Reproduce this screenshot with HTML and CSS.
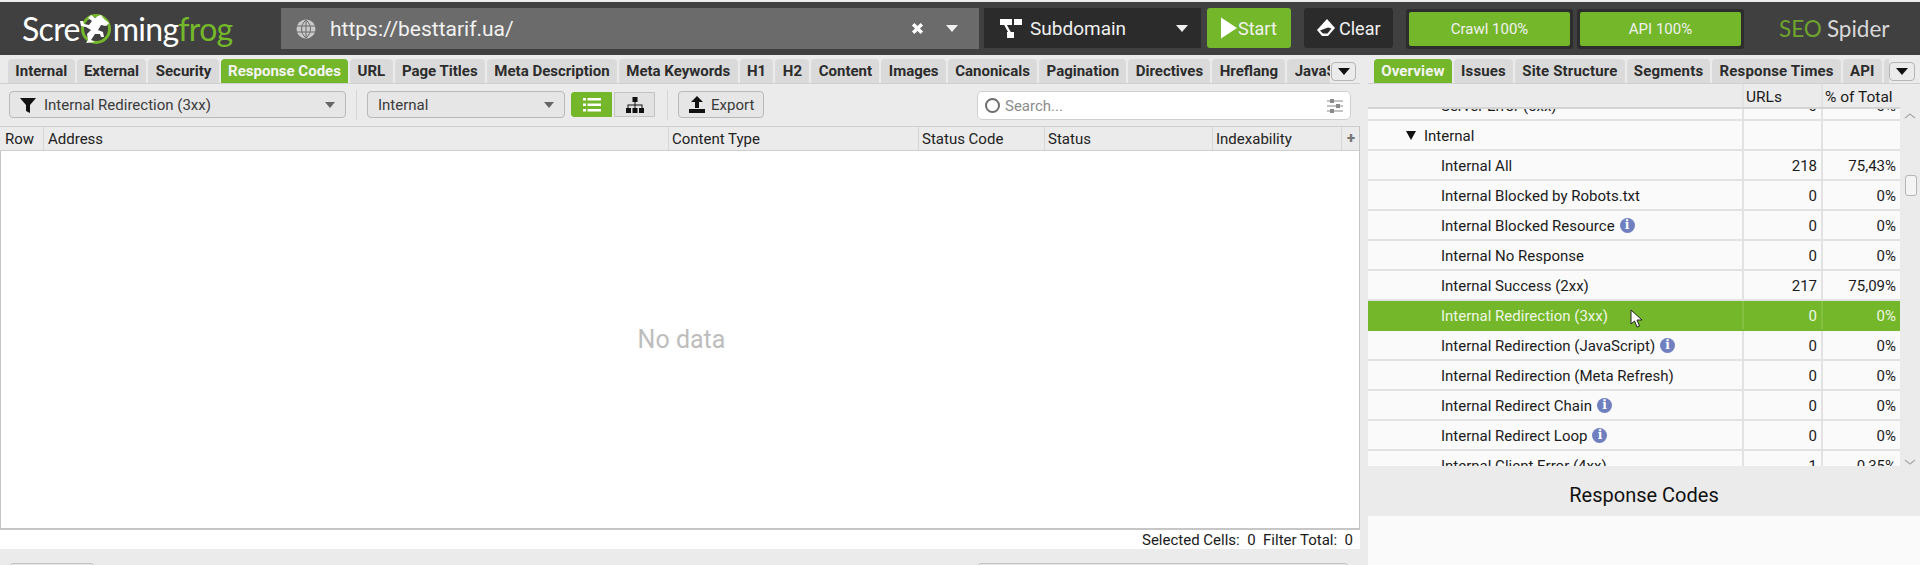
FILE: index.html
```html
<!DOCTYPE html>
<html lang="en">
<head>
<meta charset="utf-8">
<title>Screaming Frog SEO Spider</title>
<link rel="stylesheet" href="styles.css">
</head>
<body>
<div class="app">
  <header class="topbar">
    <div class="logo">
      <span>Scre</span>
      <svg class="frog" viewBox="0 0 32 34" width="32" height="34" aria-hidden="true">
        <circle cx="16" cy="16" r="13.5" fill="none" stroke="#74b72a" stroke-width="3"/>
        <path d="M24 6 l5 4 -3 3 -5 -1 -3 5 5 2 1 5 -3 0 -1 -3 -5 0 -4 6 4 2 -9 1 2 -3 -1 -6 4 -4 -5 -3 -5 -1 -1 -5 3 0 1 3 5 1 3 -4 -4 -3 3 -3 4 3 3 -2 3 -1z" fill="#fff"/>
      </svg>
      <span>ming</span><span class="logo-green">frog</span>
    </div>
    <div class="urlbar">
      <svg class="globe" viewBox="0 0 20 20" width="20" height="20" aria-hidden="true">
        <circle cx="10" cy="10" r="9.500" fill="#c9c9c9"/>
        <path d="M1 7h18M1 13h18M10 1v18M10 1c-6 5-6 13 0 18M10 1c6 5 6 13 0 18" fill="none" stroke="#6b6b6b" stroke-width="1"/>
      </svg>
      <span class="url">https://besttarif.ua/</span>
      <svg class="x" viewBox="0 0 12 12" width="13" height="13" aria-hidden="true"><path d="M2 2l8 8M10 2l-8 8" stroke="#fff" stroke-width="3.200"/></svg>
      <span class="caret caret-light url-caret"></span>
    </div>
    <div class="mode">
      <svg viewBox="0 0 24 20" width="24" height="20" aria-hidden="true">
        <path d="M1 1h12v6H1zM15 1h8v6h-8zM8 14h7v6H8z" fill="#fff"/>
        <path d="M6 6l5 9" stroke="#fff" stroke-width="2.500" fill="none"/>
      </svg>
      <span class="mode-label">Subdomain</span>
      <span class="caret caret-light"></span>
    </div>
    <button class="btn-start"><svg viewBox="0 0 18 22" width="17" height="22" aria-hidden="true"><path d="M0 0l17 11L0 22z" fill="#fff"/></svg>Start</button>
    <button class="btn-clear"><svg viewBox="0 0 20 18" width="20" height="18" aria-hidden="true"><path d="M11 0l8 9-7 8H6l-5-6z" fill="#fff"/><path d="M4 11.500l8-3 3.500 1-4 5H7z" fill="#2b2b2b"/></svg>Clear</button>
    <div class="progress"><span>Crawl 100%</span></div>
    <div class="progress"><span>API 100%</span></div>
    <div class="brand"><span class="brand-seo">SEO</span> Spider</div>
  </header>

  <main class="main">
    <section class="left">
      <div class="tabrow left-tabs">
        <div class="tabs">
          <span class="tab">Internal</span><span class="tab">External</span><span class="tab">Security</span><span class="tab active">Response Codes</span><span class="tab">URL</span><span class="tab">Page Titles</span><span class="tab">Meta Description</span><span class="tab">Meta Keywords</span><span class="tab">H1</span><span class="tab">H2</span><span class="tab">Content</span><span class="tab">Images</span><span class="tab">Canonicals</span><span class="tab">Pagination</span><span class="tab">Directives</span><span class="tab">Hreflang</span><span class="tab">JavaScript</span>
        </div>
        <span class="more"><i class="caret caret-dark"></i></span>
      </div>
      <div class="toolbar">
        <div class="select select-filter">
          <svg viewBox="0 0 16 16" width="16" height="16" aria-hidden="true"><path d="M0 1h16L10 8v8l-4-2V8z" fill="#111"/></svg>
          <span class="select-text">Internal Redirection (3xx)</span>
          <span class="caret caret-grey"></span>
        </div>
        <span class="sep"></span>
        <div class="select select-scope">
          <span class="select-text">Internal</span>
          <span class="caret caret-grey"></span>
        </div>
        <span class="view view-on">
          <svg viewBox="0 0 18 16" width="18" height="16" aria-hidden="true"><path d="M0 1h3v2.500H0zM4.500 1H18v2.500H4.500zM0 6.500h3V9H0zM4.500 6.500H18V9H4.500zM0 12h3v2.500H0zM4.500 12H18v2.500H4.500z" fill="#fff"/></svg>
        </span>
        <span class="view">
          <svg viewBox="0 0 18 16" width="18" height="16" aria-hidden="true"><path d="M6.500 0h5v5h-5zM0 11h5v5H0zM6.500 11h5v5h-5zM13 11h5v5h-5zM8.500 5h1v2.500h7V11h-1V8.500h-6V11h-1V8.500h-6V11h-1V7.500h7z" fill="#111"/></svg>
        </span>
        <span class="sep sep-b"></span>
        <button class="export">
          <svg viewBox="0 0 18 18" width="18" height="18" aria-hidden="true"><path d="M9 0l6 6h-4v6H7V6H3zM1 13h16v4H1z" fill="#111"/></svg>Export
        </button>
        <div class="search">
          <span class="search-ring"></span>
          <span class="search-text">Search...</span>
          <svg viewBox="0 0 16 14" width="16" height="14" aria-hidden="true"><path d="M0 2h16M0 7h16M0 12h16" stroke="#8a8a8a"/><path d="M3 0h4v4H3zM9 5h4v4H9zM3 10h4v4H3z" fill="#8a8a8a"/></svg>
        </div>
      </div>
      <div class="table">
        <div class="thead">
          <span class="th th-row">Row</span>
          <span class="th th-address">Address</span>
          <span class="th th-type">Content Type</span>
          <span class="th th-code">Status Code</span>
          <span class="th th-status">Status</span>
          <span class="th th-index">Indexability</span>
          <span class="th th-plus">+</span>
        </div>
        <div class="tbody">No data</div>
      </div>
      <div class="totals">Selected Cells:&nbsp; 0 &nbsp;Filter Total:&nbsp; 0</div>
      <div class="foot">
        <span class="foot-btn foot-a"></span>
        <span class="foot-btn foot-b"></span>
      </div>
    </section>

    <section class="right">
      <div class="tabrow right-tabs">
        <div class="tabs">
          <span class="tab">Overview</span><span class="tab">Issues</span><span class="tab">Site Structure</span><span class="tab">Segments</span><span class="tab">Response Times</span><span class="tab">API</span><span class="tab">Spelling</span>
        </div>
        <span class="more more-r"><i class="caret caret-dark"></i></span>
      </div>
      <div class="overview">
        <div class="ohead">
          <span class="oc-name"></span><span class="oc-urls">URLs</span><span class="oc-pct">% of Total</span>
        </div>
        <div class="olist">
          <div class="orow orow-clip"><span class="oc-name">Server Error (5xx)</span><span class="oc-urls">0</span><span class="oc-pct">0%</span></div>
          <div class="orow orow-group"><span class="oc-name"><i class="tri"></i>Internal</span><span class="oc-urls"></span><span class="oc-pct"></span></div>
          <div class="orow"><span class="oc-name">Internal All</span><span class="oc-urls">218</span><span class="oc-pct">75,43%</span></div>
          <div class="orow"><span class="oc-name">Internal Blocked by Robots.txt</span><span class="oc-urls">0</span><span class="oc-pct">0%</span></div>
          <div class="orow"><span class="oc-name">Internal Blocked Resource<i class="info">i</i></span><span class="oc-urls">0</span><span class="oc-pct">0%</span></div>
          <div class="orow"><span class="oc-name">Internal No Response</span><span class="oc-urls">0</span><span class="oc-pct">0%</span></div>
          <div class="orow"><span class="oc-name">Internal Success (2xx)</span><span class="oc-urls">217</span><span class="oc-pct">75,09%</span></div>
          <div class="orow orow-on"><span class="oc-name">Internal Redirection (3xx)</span><span class="oc-urls">0</span><span class="oc-pct">0%</span></div>
          <div class="orow"><span class="oc-name">Internal Redirection (JavaScript)<i class="info">i</i></span><span class="oc-urls">0</span><span class="oc-pct">0%</span></div>
          <div class="orow"><span class="oc-name">Internal Redirection (Meta Refresh)</span><span class="oc-urls">0</span><span class="oc-pct">0%</span></div>
          <div class="orow"><span class="oc-name">Internal Redirect Chain<i class="info">i</i></span><span class="oc-urls">0</span><span class="oc-pct">0%</span></div>
          <div class="orow"><span class="oc-name">Internal Redirect Loop<i class="info">i</i></span><span class="oc-urls">0</span><span class="oc-pct">0%</span></div>
          <div class="orow"><span class="oc-name">Internal Client Error (4xx)</span><span class="oc-urls">1</span><span class="oc-pct">0,35%</span></div>
          <svg class="cursor" viewBox="0 0 13 19" width="13" height="19" aria-hidden="true"><path d="M1 1v14l3.500-3 2.500 6 2.500-1-2.500-6h5z" fill="#fff" stroke="#222"/></svg>
        </div>
        <div class="scrollbar">
          <svg viewBox="0 0 12 6" width="12" height="6" aria-hidden="true"><path d="M1 5l5-4 5 4" fill="none" stroke="#a8a8a8" stroke-width="1.200"/></svg>
          <span class="thumb"></span>
          <svg class="sb-down" viewBox="0 0 12 6" width="12" height="6" aria-hidden="true"><path d="M1 1l5 4 5-4" fill="none" stroke="#a8a8a8" stroke-width="1.200"/></svg>
        </div>
      </div>
      <div class="detail-title">Response Codes</div>
      <div class="detail-body"></div>
    </section>
  </main>
</div>
</body>
</html>
```

FILE: styles.css
```css
* { box-sizing: border-box; }
html, body { margin: 0; padding: 0; height: 565px; overflow: hidden; }
body { background: #ebebeb; font-family: Roboto, "Liberation Sans", sans-serif; font-size: 15px; color: #1a1a1a; }
.app { width: 1920px; height: 565px; padding-top: 2px; display: flex; flex-direction: column; overflow: hidden; }

/* top bar */
.topbar { height: 53px; flex: none; background: #404040; display: flex; align-items: flex-start; padding-top: 6px; }
.logo { width: 281px; height: 41px; padding-left: 22px; display: flex; align-items: center; font-family: Lato, sans-serif; font-weight: 400; font-size: 32px; letter-spacing: -.7px; color: #fff; white-space: nowrap; }
.frog { margin: 2px 1px 0 0; flex: none; }
.logo-green { color: #74b72a; }
.urlbar { width: 698px; height: 41px; background: #6b6b6b; display: flex; align-items: center; padding-left: 15px; color: #f2f2f2; }
.url { font-size: 21px; margin-left: 14px; flex: 1; }
.x { margin-right: 22px; }
.url-caret { margin-right: 21px; }
.caret { display: inline-block; width: 0; height: 0; border-left: 6px solid transparent; border-right: 6px solid transparent; flex: none; }
.caret-light { border-top: 7px solid #f0f0f0; }
.caret-dark { border-top: 7px solid #111; }
.caret-grey { border-top: 6px solid #666; border-left-width: 5px; border-right-width: 5px; }
.mode { width: 217px; height: 40px; margin-left: 5px; background: #2b2b2b; color: #f0f0f0; display: flex; align-items: center; padding-left: 15px; }
.mode-label { font-size: 19px; margin-left: 7px; flex: 1; }
.mode .caret { margin-right: 13px; }
button { font-family: inherit; border: 0; padding: 0; display: flex; align-items: center; }
.btn-start { width: 84px; height: 40px; margin-left: 6px; background: #74b72a; color: #f2f2f2; font-size: 18px; border-radius: 3px; padding-left: 14px; gap: 0; }
.btn-clear { width: 89px; height: 40px; margin-left: 13px; background: #2b2b2b; color: #f2f2f2; font-size: 18px; border-radius: 3px; padding-left: 12px; gap: 3px; }
.progress { width: 167px; height: 40px; margin: 1px 0 0 0; background: #2d2d2d; border-radius: 3px; padding: 3px; }
.btn-clear + .progress { margin-left: 13px; }
.progress + .progress { margin-left: 4px; }
.progress span { display: flex; align-items: center; justify-content: center; height: 34px; background: #74b72a; border-radius: 2px; color: #f0f0f0; font-size: 15px; }
.brand { margin-left: 35px; height: 41px; display: flex; align-items: center; gap: 5px; font-family: Lato, sans-serif; font-size: 22.500px; font-weight: 400; color: #d8d8d8; white-space: nowrap; }
.brand-seo { color: #6ea32e; }

/* panes */
.main { flex: 1; display: flex; min-height: 0; }
.left { width: 1360px; flex: none; display: flex; flex-direction: column; }
.right { width: 552px; margin-left: 8px; flex: none; display: flex; flex-direction: column; }

/* tabs */
.tabrow { height: 29px; flex: none; padding-top: 4px; display: flex; position: relative; border-bottom: 1px solid #d0d0d0; }
.left-tabs { padding-left: 8px; }
.right-tabs { padding-left: 6px; }
.tabs { display: flex; gap: 2px; overflow: hidden; }
.left-tabs .tabs { width: 1322px; }
.right-tabs .tabs { width: 515px; }
.tab { height: 24px; padding: 0 7.350px; background: #dadada; border-radius: 4px 4px 0 0; font-weight: 700; font-size: 15px; line-height: 24px; color: #2c2c2c; white-space: nowrap; flex: none; }
.right-tabs .tab { letter-spacing: .15px; padding: 0 7.200px; }
.tab:nth-child(4), .right-tabs .tab:first-child { background: #74b72a; color: #f4f4f4; }
.right-tabs .tab:nth-child(4) { background: #dadada; color: #2c2c2c; }
.more { position: absolute; top: 7px; width: 25px; height: 19px; background: #ebebeb; border: 1px solid #b5b5b5; border-radius: 4px; display: flex; align-items: center; justify-content: center; }
.left-tabs .more { left: 1331px; }
.more-r { left: 521px; width: 26px; }

/* toolbar */
.toolbar { height: 42px; flex: none; display: flex; align-items: flex-start; padding: 7px 0 0 9px; }
.select { height: 27px; border: 1px solid #b9b9b9; border-radius: 4px; background: #e6e6e6; display: flex; align-items: center; font-size: 15px; color: #3a3a3a; }
.select-text { flex: 1; }
.select-filter { width: 337px; padding: 0 10px; gap: 8px; }
.select-scope { width: 198px; padding: 0 10px 0 10px; margin-left: 0; }
.sep { width: 1px; height: 30px; margin: -1px 10px 0 10px; background: #d6d6d6; flex: none; }
.sep-b { margin: -1px 10px 0 10px; }
.view { width: 41px; height: 25px; margin: 1px 2px 0 0; background: #e2e2e2; border: 1px solid #c4c4c4; display: flex; align-items: center; justify-content: center; }
.select-scope + .view { margin-left: 6px; border-radius: 3px 0 0 3px; }
.view-on { background: #74b72a; border-color: #74b72a; }
.export { width: 86px; height: 27px; background: #e6e6e6; border: 1px solid #b9b9b9; border-radius: 4px; font-size: 15px; color: #3a3a3a; padding-left: 9px; gap: 5px; }
.search { width: 374px; height: 29px; margin-left: 213px; background: #fff; border: 1px solid #cfcfcf; border-radius: 5px; display: flex; align-items: center; padding: 0 7px 0 7px; color: #8c8c8c; font-size: 15px; }
.search-ring { width: 15px; height: 15px; border: 2px solid #6d6d6d; border-radius: 50%; flex: none; }
.search-text { flex: 1; margin-left: 5px; }

/* table */
.table { height: 404px; flex: none; display: flex; flex-direction: column; border-right: 1px solid #c6c6c6; }
.thead { height: 25px; flex: none; display: flex; background: #ebebeb; border-top: 1px solid #cfcfcf; border-bottom: 1px solid #cfcfcf; }
.th { border-left: 1px solid #d6d6d6; padding-left: 3px; line-height: 25px; white-space: nowrap; color: #222; font-size: 15px; }
.th-row { width: 43px; border-left: 0; padding-left: 5px; }
.th-address { width: 625px; padding-left: 4px; }
.th-type { width: 250px; }
.th-code { width: 126px; }
.th-status { width: 168px; }
.th-index { width: 129px; }
.th-plus { flex: 1; font-weight: 900; color: #777; padding-left: 5px; line-height: 22px; }
.tbody { flex: 1; background: #fff; border-left: 1px solid #c6c6c6; border-bottom: 2px solid #c6c6c6; display: flex; align-items: center; justify-content: center; font-size: 25px; color: #bdbdbd; padding: 0 0 0 3px; }
.totals { height: 19px; flex: none; background: #fff; text-align: right; padding-right: 7px; font-size: 15px; line-height: 20px; color: #1a1a1a; }
.foot { flex: 1; position: relative; }
.foot-btn { position: absolute; top: 14px; height: 12px; background: #e6e6e6; border: 1px solid #c4c4c4; border-radius: 3px; }
.foot-a { left: 10px; width: 84px; }
.foot-b { left: 978px; width: 370px; }

/* overview */
.overview { height: 382px; flex: none; position: relative; display: flex; flex-direction: column; overflow: hidden; padding-right: 20px; margin-top: 0; }
.ohead { height: 25px; flex: none; display: flex; background: #ebebeb; border-bottom: 2px solid #d4d4d4; line-height: 26px; font-size: 15.500px; }
.ohead .oc-urls, .ohead .oc-pct { text-align: left; padding: 0 0 0 2px; }
.oc-name { width: 374px; padding-left: 73px; white-space: nowrap; display: flex; align-items: center; flex: none; }
.oc-urls { width: 79px; flex: none; text-align: right; padding-right: 4px; border-left: 2px solid #e2e2e2; }
.oc-pct { width: 79px; flex: none; text-align: right; padding-right: 4px; border-left: 2px solid #e2e2e2; }
.olist { flex: 1; position: relative; overflow: hidden; background: #fafafa; }
.orow { height: 30px; display: flex; line-height: 30px; border-bottom: 2px solid #e2e2e2; color: #1a1a1a; }
.orow .oc-name { padding-top: 1px; }
.orow-clip { margin-top: -18px; }
.orow-group .oc-name { padding-left: 38px; }
.tri { width: 0; height: 0; margin-right: 8px; border-left: 5px solid transparent; border-right: 5px solid transparent; border-top: 9px solid #111; }
.orow-on { background: #74b72a; color: #eef6e4; border-bottom-color: #74b72a; }
.orow-on .oc-urls, .orow-on .oc-pct { border-left-color: #84c03f; }
.info { width: 15px; height: 15px; margin-left: 5px; border-radius: 50%; background: #6f7fc0; color: #fff; font: 700 12px/15px "DejaVu Serif", serif; text-align: center; }
.cursor { position: absolute; left: 262px; top: 200px; }
.scrollbar { position: absolute; right: 0; top: 25px; bottom: 0; width: 20px; background: #ebebeb; display: flex; flex-direction: column; align-items: center; padding: 4px 0 1px; }
.thumb { width: 12px; height: 21px; margin: 56px 0 0 1px; background: #f4f4f4; border: 1px solid #b5b5b5; border-radius: 3px; }
.sb-down { margin-top: auto; }
.detail-title { height: 50px; flex: none; background: #ebebeb; display: flex; align-items: center; justify-content: center; padding-top: 8px; font-size: 20px; color: #111; }
.detail-body { flex: 1; background: #fafafa; }
```
